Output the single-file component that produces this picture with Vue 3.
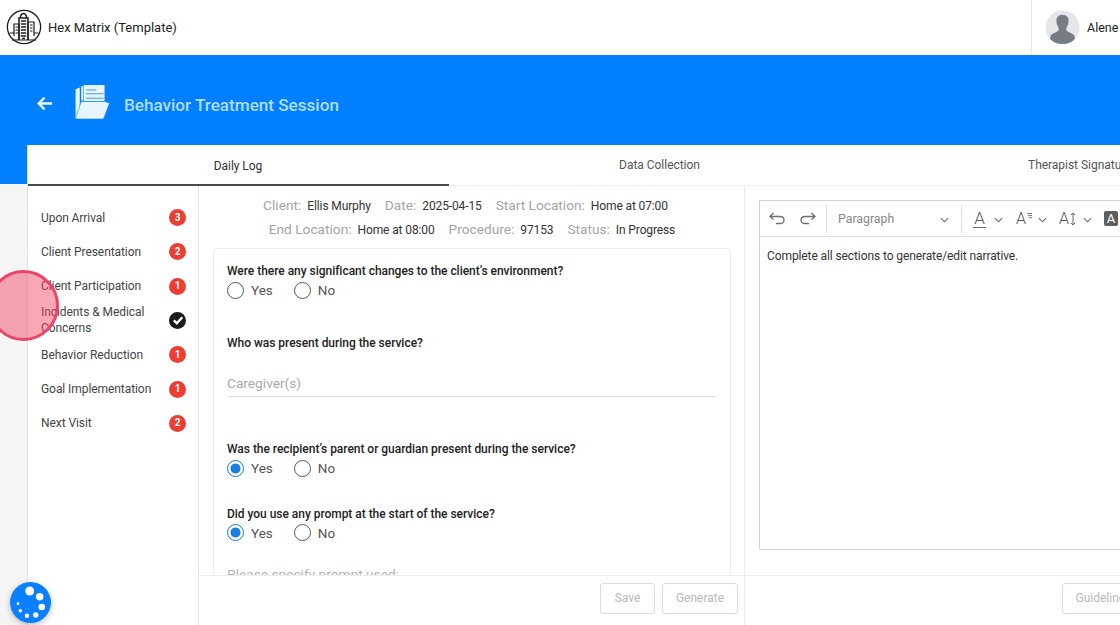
<script setup>
const navItems = [
  { label: 'Upon Arrival', count: 3 },
  { label: 'Client Presentation', count: 2 },
  { label: 'Client Participation', count: 1 },
  { label: 'Incidents & Medical Concerns', done: true },
  { label: 'Behavior Reduction', count: 1 },
  { label: 'Goal Implementation', count: 1 },
  { label: 'Next Visit', count: 2 },
]
</script>

<template>
  <div class="app">
    <header class="topbar">
      <div class="brand">
        <svg class="logo" viewBox="0 0 36 36" fill="none" stroke="#1c1c1c">
          <circle cx="18" cy="18" r="16.6" stroke-width="1.300" />
          <path d="M13 31V9h9v22M14.500 9V7.500C15 5.500 16.500 4.500 17.500 4.500S20 5.500 20.500 7.500V9M14.800 12h5.400M14.800 15h5.400M14.800 18h5.400M14.800 21h5.400M14.800 24h5.400M14.800 27h5.400M16 29.500h3" stroke-width="1.500" />
          <path d="M22 31V13h6v14M24 16h2.500M24 19h2.500M24 22h2.500M13 31V15H8v12M9.500 18H12M9.500 21H12M9.500 24H12M3.500 24H8M28 24h4.500M6 31h24" stroke-width="1.200" />
        </svg>
        <span class="brand-name">Hex Matrix (Template)</span>
      </div>
      <div class="user">
        <svg class="avatar" viewBox="0 0 36 36">
          <circle cx="18" cy="18" r="17.5" fill="#e4e6ea" />
          <path d="M18 5c-4.600 0-6.500 3-6.200 7 .1 1.800.7 3.800 1.700 5.300.6 1 .8 2.700.3 3.700-1.500 2-7 3-8 5.500-.5 1.300-.5 3-.3 3.500 3 3.200 7.500 5 12.500 5s9.500-1.800 12.500-5c.2-.5.2-2.200-.3-3.500-1-2.500-6.500-3.500-8-5.500-.5-1-.3-2.700.3-3.700 1-1.500 1.600-3.500 1.700-5.300.3-4-1.600-7-6.200-7z" fill="#767b84" />
        </svg>
        <span class="user-name">Alene</span>
      </div>
    </header>

    <section class="hero">
      <svg class="back" viewBox="0 0 20 18" fill="none" stroke="#eef7ff" stroke-width="2.600">
        <path d="M18 9H3M9.500 2.500 3 9l6.500 6.500" />
      </svg>
      <svg class="folder" viewBox="0 0 36 36">
        <path d="M2.500 5 6.600 3.500V34H4a1.500 1.500 0 0 1-1.500-1.500z" fill="#e8f4fe" />
        <path d="M8 2.500 10 2V16H8z" fill="#e8f4fe" />
        <path d="M10.500 1H30.700V16.500H10.500z" fill="#e8f4fe" />
        <path d="M12.400 5.900h10.200M12.400 9.400h17.300M12.400 13.900h17.300" stroke="#3f9cf0" stroke-width="1" />
        <path d="M8 17h22.700l4.800 1.600L29.700 34H3.500C2.600 34 2.500 33 2.800 32z" fill="#e8f4fe" stroke="#0080ff" stroke-width=".5" />
      </svg>
      <h1 class="title">Behavior Treatment Session</h1>
    </section>

    <div class="page">
      <div class="rail"><div class="rail-blue"></div></div>
      <main class="panel">
        <nav class="tabs">
          <div class="tab active">Daily Log</div>
          <div class="tab">Data Collection</div>
          <div class="tab">Therapist Signature</div>
        </nav>

        <div class="columns">
          <aside class="side">
            <div v-for="item in navItems" :key="item.label" class="nav-item">
              <span class="nav-label">{{ item.label }}</span>
              <span v-if="item.done" class="badge done">
                <svg viewBox="0 0 18 18" width="18" height="18" fill="none" stroke="#fff" stroke-width="2.400">
                  <path d="M4.800 9.300 7.800 12.200 13.300 6.300" />
                </svg>
              </span>
              <span v-else class="badge">{{ item.count }}</span>
            </div>
          </aside>

          <section class="middle">
            <div class="middle-scroll">
              <div class="meta">
                <div class="meta-row first">
                  <span class="k">Client:</span><span class="v">Ellis Murphy</span>
                  <span class="k">Date:</span><span class="v">2025-04-15</span>
                  <span class="k">Start Location:</span><span class="v">Home at 07:00</span>
                </div>
                <div class="meta-row">
                  <span class="k">End Location:</span><span class="v">Home at 08:00</span>
                  <span class="k">Procedure:</span><span class="v">97153</span>
                  <span class="k">Status:</span><span class="v">In Progress</span>
                </div>
              </div>
              <div class="card">
                <div class="q q1">
                  <div class="q-label">Were there any significant changes to the client’s environment?</div>
                  <div class="radios">
                    <span class="radio"><i class="dot"></i>Yes</span>
                    <span class="radio"><i class="dot"></i>No</span>
                  </div>
                </div>
                <div class="q q2">
                  <div class="q-label">Who was present during the service?</div>
                  <div class="field">Caregiver(s)</div>
                </div>
                <div class="q q3">
                  <div class="q-label">Was the recipient’s parent or guardian present during the service?</div>
                  <div class="radios">
                    <span class="radio"><i class="dot on"></i>Yes</span>
                    <span class="radio"><i class="dot"></i>No</span>
                  </div>
                </div>
                <div class="q q4">
                  <div class="q-label">Did you use any prompt at the start of the service?</div>
                  <div class="radios">
                    <span class="radio"><i class="dot on"></i>Yes</span>
                    <span class="radio"><i class="dot"></i>No</span>
                  </div>
                </div>
                <div class="field-plain">Please specify prompt used:</div>
              </div>
            </div>
            <footer class="foot foot-mid">
              <button class="btn save">Save</button>
              <button class="btn gen">Generate</button>
            </footer>
          </section>

          <section class="right">
            <div class="right-body">
              <div class="editor">
                <div class="toolbar">
                  <svg class="ti" viewBox="0 0 20 20" fill="none" stroke="#6f6f6f" stroke-width="1.300">
                    <path d="M6.500 5 3 8.500 6.500 11.500M3 8.500h9.500c3.500 0 4.500 2 4.500 3.500s-1 3.500-4 3.500H9" />
                  </svg>
                  <svg class="ti ti2" viewBox="0 0 20 20" fill="none" stroke="#6f6f6f" stroke-width="1.300">
                    <path d="M13.500 5 17 8.500 13.500 11.500M17 8.500H7.500C4 8.500 3 10.500 3 12s1 3.500 4 3.500h4" />
                  </svg>
                  <i class="sep"></i>
                  <div class="para"><span>Paragraph</span><svg class="chev" viewBox="0 0 10 6" fill="none" stroke="#666" stroke-width="1.200"><path d="M1 1l4 4 4-4" /></svg></div>
                  <i class="sep"></i>
                  <span class="ta under">A</span>
                  <svg class="chev c-a" viewBox="0 0 10 6" fill="none" stroke="#666" stroke-width="1.200"><path d="M1 1l4 4 4-4" /></svg>
                  <span class="ta ta2">A<svg class="lines" viewBox="0 0 6 8" stroke="#666" stroke-width="1"><path d="M0 1h6M1 3.500h5M2 6h4" /></svg></span>
                  <svg class="chev c-b" viewBox="0 0 10 6" fill="none" stroke="#666" stroke-width="1.200"><path d="M1 1l4 4 4-4" /></svg>
                  <span class="ta ta3">A<svg class="arrows" viewBox="0 0 6 14" fill="none" stroke="#666" stroke-width="1"><path d="M3 1v12M1 3l2-2 2 2M1 11l2 2 2-2" /></svg></span>
                  <svg class="chev c-c" viewBox="0 0 10 6" fill="none" stroke="#666" stroke-width="1.200"><path d="M1 1l4 4 4-4" /></svg>
                  <span class="ta-box">A</span>
                </div>
                <div class="editor-text">Complete all sections to generate/edit narrative.</div>
              </div>
            </div>
            <footer class="foot foot-right">
              <button class="btn guide">Guidelines</button>
            </footer>
          </section>
        </div>
      </main>
    </div>

    <div class="pulse"></div>
    <div class="fab">
      <svg viewBox="0 0 41 41" width="41" height="41" fill="#fff">
        <circle cx="19.700" cy="9" r="4.500" />
        <circle cx="29.700" cy="14.700" r="3.700" />
        <circle cx="31.700" cy="25" r="3.300" />
        <circle cx="25.700" cy="33" r="2.700" />
        <circle cx="17" cy="33.700" r="2.200" />
        <circle cx="10.300" cy="28.700" r="1.800" />
        <circle cx="8" cy="21.700" r="1.400" />
      </svg>
    </div>
  </div>
</template>

<style scoped>
.app {
  position: relative;
  width: 1120px;
  height: 625px;
  overflow: hidden;
  background: #f5f5f5;
  font-family: Roboto, "Liberation Sans", sans-serif;
  color: #212121;
}
.topbar {
  display: flex;
  justify-content: space-between;
  height: 55px;
  background: #fff;
  box-sizing: border-box;
}
.brand {
  display: flex;
  align-items: center;
  gap: 6px;
  padding-left: 6px;
  padding-bottom: 1px;
}
.logo { width: 36px; height: 36px; }
.brand-name { font-size: 13px; color: #222; }
.user {
  display: flex;
  align-items: center;
  gap: 7px;
  width: 89px;
  flex: none;
  padding-left: 13px;
  box-sizing: border-box;
  border-left: 1px solid #e8e8e8;
}
.avatar { width: 35px; height: 35px; flex: none; }
.user-name { font-size: 12.500px; color: #222; }
.hero {
  display: flex;
  align-items: center;
  height: 90px;
  background: #0080ff;
  padding: 10px 0 0 36px;
  box-sizing: border-box;
}
.back { width: 18px; height: 17px; margin-top: -4px; flex: none; }
.folder { width: 37px; height: 37px; margin-left: 18.500px; margin-top: -5px; flex: none; }
.title {
  margin: 0 0 0 14.500px;
  font-size: 17.100px;
  font-weight: 500;
  color: #b3dcff;
}
.page { display: flex; height: 480px; }
.rail { width: 27px; flex: none; }
.rail-blue { height: 39px; background: #0080ff; }
.panel {
  flex: 1;
  min-width: 0;
  background: #fff;
  display: flex;
  flex-direction: column;
  border-left: 1px solid #e4e4e4;
  box-sizing: border-box;
}
.tabs {
  display: flex;
  height: 41px;
  flex: none;
  border-bottom: 1px solid #eeeeee;
  box-sizing: border-box;
  width: 1092px;
}
.tab {
  width: 421px;
  flex: none;
  display: flex;
  align-items: center;
  justify-content: center;
  font-size: 12px;
  letter-spacing: -0.03px;
  color: #555;
  box-sizing: border-box;
  white-space: nowrap;
}
.tab.active { color: #333; border-bottom: 2px solid #4a4a4a; height: 41px; padding-top: 2px; padding-right: 1px; }
.tab:nth-child(3) { width: 250px; justify-content: flex-start; padding-left: 158px; }
.columns { display: flex; flex: 1; min-height: 0; }
.side {
  width: 171px;
  flex: none;
  box-sizing: border-box;
  border-right: 1px solid #e8e8e8;
  padding: 14.400px 12px 0 13px;
}
.nav-item {
  display: flex;
  align-items: center;
  justify-content: space-between;
  min-height: 34.300px;
  font-size: 12px;
  letter-spacing: -0.07px;
  line-height: 16px;
  color: #444;
}
.nav-label { width: 112px; }
.badge {
  width: 17px;
  height: 17px;
  border-radius: 50%;
  background: #ee3d32;
  color: #fff;
  font-size: 10px;
  font-weight: 700;
  display: flex;
  align-items: center;
  justify-content: center;
  flex: none;
}
.badge.done { background: #1b1b1b; }
.badge svg { flex: none; }
.middle {
  width: 546px;
  flex: none;
  display: flex;
  flex-direction: column;
  border-right: 1px solid #eaeaea;
  box-sizing: border-box;
}
.middle-scroll { flex: 1; min-height: 0; overflow: hidden; padding: 0 13px 0 14px; }
.meta { padding-top: 7px; height: 54px; box-sizing: border-box; margin-bottom: 8px; }
.meta-row {
  display: flex;
  justify-content: center;
  align-items: baseline;
  height: 24px;
  line-height: 24px;
  font-size: 12px;
  letter-spacing: -0.12px;
  color: #333;
  white-space: nowrap;
}
.meta-row.first { padding-right: 13px; }
.k { font-size: 13.700px; letter-spacing: 0; color: #a4a4a4; margin-left: 14px; margin-right: 6px; }
.k:first-child { margin-left: 0; }
.v { color: #333; }
.card {
  border: 1px solid #ececec;
  border-radius: 4px 4px 0 0;
  height: 400px;
  box-sizing: border-box;
  padding: 14px 13px 0;
  font-size: 13px;
}
.q-label { font-size: 12px; letter-spacing: -0.03px; font-weight: 500; color: #222; line-height: 16px; }
.q1 { height: 72px; }
.q2 { height: 106px; }
.q3 { height: 64.500px; }
.q4 { height: 60px; }
.radios { display: flex; gap: 21px; margin-top: 1px; align-items: center; height: 20px; }
.radio { display: flex; align-items: center; gap: 7px; font-size: 13.500px; color: #555; }
.dot {
  width: 17px;
  height: 17px;
  box-sizing: border-box;
  border: 1.300px solid #555;
  border-radius: 50%;
  display: block;
  flex: none;
}
.dot.on { border-color: #1976d2; background: radial-gradient(circle, #1a7de0 0 4.700px, #fff 5.300px); }
.field {
  margin-top: 23px;
  font-size: 13.700px;
  color: #a9a9a9;
  height: 23px;
  line-height: 18px;
  border-bottom: 1px solid #dddddd;
  box-sizing: border-box;
}
.field-plain { font-size: 13.700px; color: #b5b5b5; }
.foot {
  height: 50px;
  flex: none;
  border-top: 1px solid #eeeeee;
  box-sizing: border-box;
  display: flex;
  align-items: center;
  background: #fff;
  padding-bottom: 5px;
}
.foot-mid { justify-content: flex-end; gap: 7px; padding-right: 6px; }
.btn {
  height: 31px;
  border: 1px solid #dcdcdc;
  border-radius: 3px;
  background: #fff;
  color: #b9b9b9;
  font-family: Roboto, "Liberation Sans", sans-serif;
  font-size: 12px;
  padding: 0;
  flex: none;
}
.save { width: 55px; }
.gen { width: 76px; }
.guide { width: 90px; margin-left: 316.500px; text-align: left; padding-left: 13px; }
.right { flex: 1; min-width: 0; display: flex; flex-direction: column; overflow: hidden; }
.right-body { flex: 1; min-height: 0; padding: 14px 0 0 14px; }
.editor {
  width: 400px;
  height: 350px;
  box-sizing: border-box;
  border: 1px solid #d4d4d4;
  font-size: 12px;
}
.toolbar {
  height: 36px;
  box-sizing: border-box;
  border-bottom: 1px solid #dedede;
  display: flex;
  align-items: center;
  padding-left: 7px;
  color: #777;
  white-space: nowrap;
}
.ti { width: 20px; height: 20px; flex: none; margin-top: -1px; }
.ti2 { margin-left: 11px; }
.sep { width: 1px; height: 28px; background: #dedede; margin-left: 8px; flex: none; }
.para {
  display: flex;
  align-items: center;
  justify-content: space-between;
  width: 134px;
  padding-left: 11px;
  padding-right: 12px;
  box-sizing: border-box;
  font-size: 12.300px;
  color: #888;
  flex: none;
}
.para + .sep { margin-left: 0; }
.chev { width: 9px; height: 6px; flex: none; margin-top: 2px; }
.c-a { margin-left: 8px; }
.c-b { margin-left: 6px; }
.c-c { margin-left: 7px; }
.ta { font-size: 16px; font-weight: 300; color: #555; line-height: 18px; flex: none; position: relative; }
.under { margin-left: 11px; width: 13px; border-bottom: 1.500px solid #666; height: 17px; text-align: center; line-height: 16px; font-size: 17px; }
.ta2 { margin-left: 13px; width: 16px; }
.ta3 { margin-left: 12px; width: 17px; }
.lines { position: absolute; top: 2px; right: 0; width: 5px; height: 8px; }
.arrows { position: absolute; top: 2px; right: 0; width: 6px; height: 14px; }
.ta-box {
  margin-left: 12px;
  width: 14px;
  height: 15px;
  border-radius: 2px;
  flex: none;
  background: #5e5e5e;
  color: #fff;
  font-size: 13px;
  line-height: 15px;
  text-align: center;
}
.editor-text { padding: 12px 7px; font-size: 12px; letter-spacing: -0.1px; line-height: 14px; color: #333; }
.pulse {
  position: absolute;
  left: -12px;
  top: 270px;
  width: 71px;
  height: 71px;
  box-sizing: border-box;
  border-radius: 50%;
  background: rgba(245, 60, 90, 0.45);
  border: 3px solid #ec4468;
}
.fab {
  position: absolute;
  left: 10px;
  top: 582px;
  width: 41px;
  height: 41px;
  border-radius: 50%;
  background: #0a80ff;
  box-shadow: 0 2px 6px rgba(0, 0, 0, 0.25);
}
</style>
